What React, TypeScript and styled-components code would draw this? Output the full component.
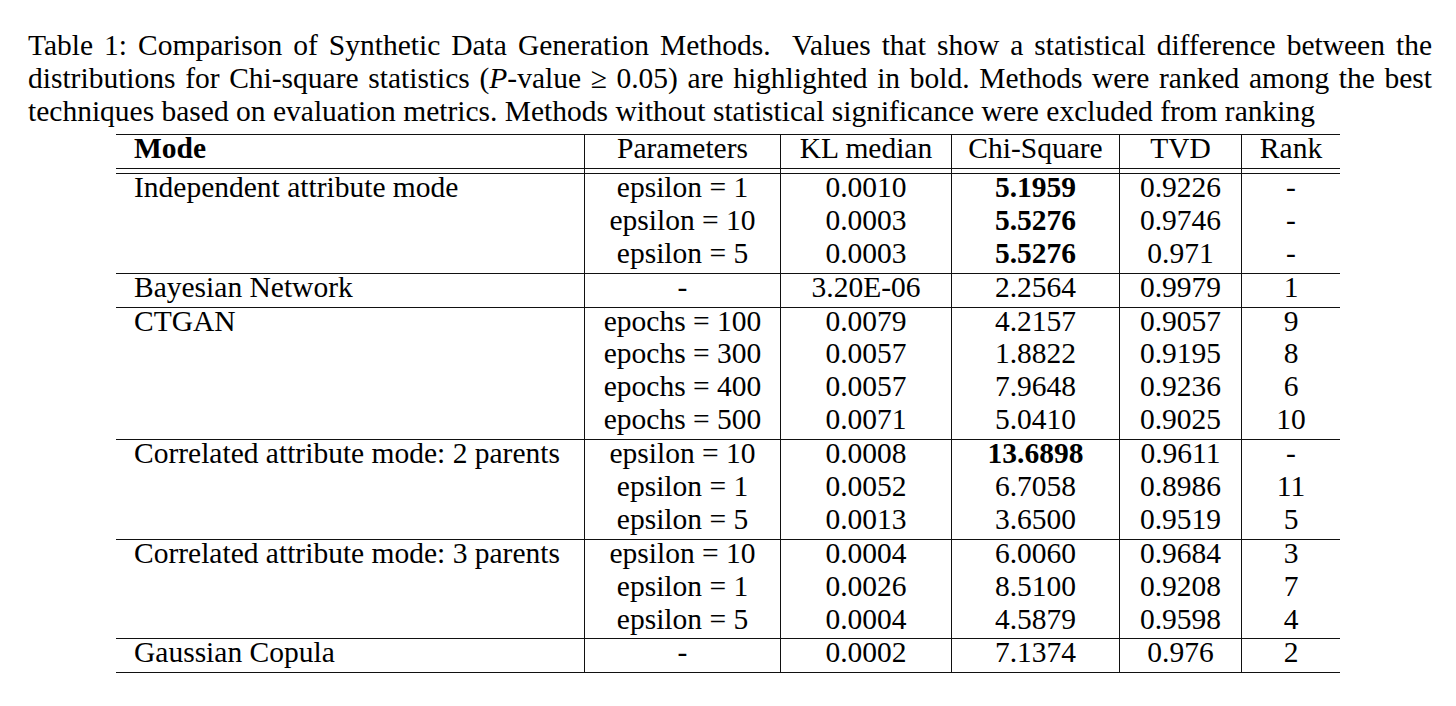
import React from 'react';
import styled, { createGlobalStyle } from 'styled-components';

const Global = createGlobalStyle`
  html, body { margin: 0; padding: 0; background: #ffffff; }
  body {
    font-family: "Liberation Serif", "Times New Roman", serif;
    color: #000000;
  }
`;

const Page = styled.div`
  width: 1456px;
  height: 706px;
  box-sizing: border-box;
  padding-top: 29px;
  overflow: hidden;
`;

const Caption = styled.div`
  margin-left: 28px;
  width: 1404px;
  font-size: 29.5px;
  line-height: 33px;
`;

const CaptionLine = styled.div<{ $justify?: boolean }>`
  text-align: ${(p) => (p.$justify ? 'justify' : 'left')};
  text-align-last: ${(p) => (p.$justify ? 'justify' : 'left')};
`;

const Table = styled.table`
  margin: 6px auto 0;
  width: 1224px;
  table-layout: fixed;
  border-collapse: separate;
  border-spacing: 0;
  font-size: 29.5px;
  border-top: 1px solid #111111;
  border-bottom: 1px solid #111111;
`;

const Cell = styled.td<{ $first?: boolean; $top?: boolean; $bold?: boolean }>`
  height: 32.9px;
  padding: 0 0 0 ${(p) => (p.$first ? '18px' : '0')};
  line-height: 27px;
  vertical-align: top;
  white-space: nowrap;
  text-align: ${(p) => (p.$first ? 'left' : 'center')};
  font-weight: ${(p) => (p.$bold ? 700 : 400)};
  border-left: ${(p) => (p.$first ? 'none' : '1px solid #111111')};
  border-top: ${(p) => (p.$top ? '1px solid #111111' : 'none')};
`;

const HeadCell = styled(Cell).attrs({ as: 'th' })`
  height: 33px;
`;

const SpacerCell = styled.td<{ $first?: boolean }>`
  height: 4px;
  padding: 0;
  font-size: 0;
  line-height: 0;
  border-top: 1px solid #111111;
  border-bottom: 1px solid #111111;
  border-left: ${(p) => (p.$first ? 'none' : '1px solid #111111')};
`;

type Row = { param: string; kl: string; chi: string; bold?: boolean; tvd: string; rank: string };
type Group = { mode: string; rows: Row[] };

const groups: Group[] = [
  {
    mode: 'Independent attribute mode',
    rows: [
      { param: 'epsilon = 1', kl: '0.0010', chi: '5.1959', bold: true, tvd: '0.9226', rank: '-' },
      { param: 'epsilon = 10', kl: '0.0003', chi: '5.5276', bold: true, tvd: '0.9746', rank: '-' },
      { param: 'epsilon = 5', kl: '0.0003', chi: '5.5276', bold: true, tvd: '0.971', rank: '-' },
    ],
  },
  {
    mode: 'Bayesian Network',
    rows: [{ param: '-', kl: '3.20E-06', chi: '2.2564', tvd: '0.9979', rank: '1' }],
  },
  {
    mode: 'CTGAN',
    rows: [
      { param: 'epochs = 100', kl: '0.0079', chi: '4.2157', tvd: '0.9057', rank: '9' },
      { param: 'epochs = 300', kl: '0.0057', chi: '1.8822', tvd: '0.9195', rank: '8' },
      { param: 'epochs = 400', kl: '0.0057', chi: '7.9648', tvd: '0.9236', rank: '6' },
      { param: 'epochs = 500', kl: '0.0071', chi: '5.0410', tvd: '0.9025', rank: '10' },
    ],
  },
  {
    mode: 'Correlated attribute mode: 2 parents',
    rows: [
      { param: 'epsilon = 10', kl: '0.0008', chi: '13.6898', bold: true, tvd: '0.9611', rank: '-' },
      { param: 'epsilon = 1', kl: '0.0052', chi: '6.7058', tvd: '0.8986', rank: '11' },
      { param: 'epsilon = 5', kl: '0.0013', chi: '3.6500', tvd: '0.9519', rank: '5' },
    ],
  },
  {
    mode: 'Correlated attribute mode: 3 parents',
    rows: [
      { param: 'epsilon = 10', kl: '0.0004', chi: '6.0060', tvd: '0.9684', rank: '3' },
      { param: 'epsilon = 1', kl: '0.0026', chi: '8.5100', tvd: '0.9208', rank: '7' },
      { param: 'epsilon = 5', kl: '0.0004', chi: '4.5879', tvd: '0.9598', rank: '4' },
    ],
  },
  {
    mode: 'Gaussian Copula',
    rows: [{ param: '-', kl: '0.0002', chi: '7.1374', tvd: '0.976', rank: '2' }],
  },
];

const colWidths = [468, 196, 171, 168, 122, 99];
const headers = ['Parameters', 'KL median', 'Chi-Square', 'TVD', 'Rank'];

export default function App() {
  return (
    <Page>
      <Global />
      <Caption>
        <CaptionLine $justify>
          Table 1: Comparison of Synthetic Data Generation Methods.&nbsp; Values that show a statistical difference between the
        </CaptionLine>
        <CaptionLine $justify>
          distributions for Chi-square statistics (<i>P</i>-value ≥ 0.05) are highlighted in bold. Methods were ranked among the best
        </CaptionLine>
        <CaptionLine>
          techniques based on evaluation metrics. Methods without statistical significance were excluded from ranking
        </CaptionLine>
      </Caption>
      <Table>
        <colgroup>
          {colWidths.map((w, i) => (
            <col key={i} style={{ width: w }} />
          ))}
        </colgroup>
        <thead>
          <tr>
            <HeadCell $first $bold>
              Mode
            </HeadCell>
            {headers.map((h) => (
              <HeadCell key={h}>{h}</HeadCell>
            ))}
          </tr>
          <tr>
            {colWidths.map((_, i) => (
              <SpacerCell key={i} $first={i === 0} />
            ))}
          </tr>
        </thead>
        <tbody>
          {groups.map((g, gi) =>
            g.rows.map((r, ri) => {
              const top = gi > 0 && ri === 0;
              return (
                <tr key={`${gi}-${ri}`}>
                  <Cell $first $top={top}>
                    {ri === 0 ? g.mode : ''}
                  </Cell>
                  <Cell $top={top}>{r.param}</Cell>
                  <Cell $top={top}>{r.kl}</Cell>
                  <Cell $top={top} $bold={r.bold}>
                    {r.chi}
                  </Cell>
                  <Cell $top={top}>{r.tvd}</Cell>
                  <Cell $top={top}>{r.rank}</Cell>
                </tr>
              );
            })
          )}
        </tbody>
      </Table>
    </Page>
  );
}
